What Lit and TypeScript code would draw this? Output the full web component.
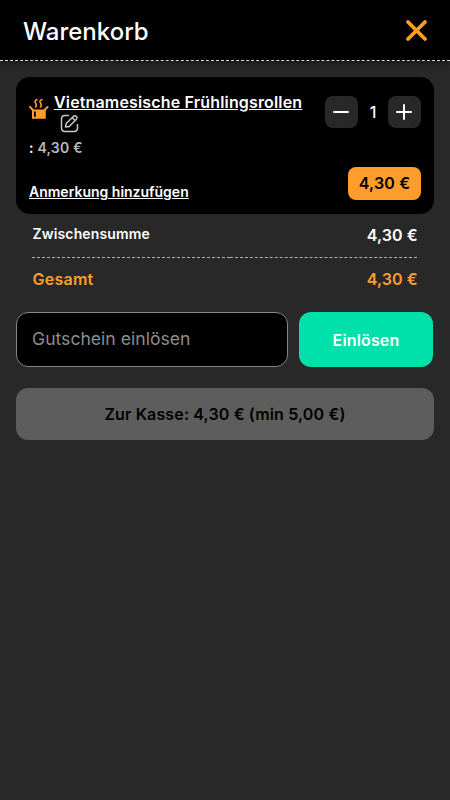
import { LitElement, html, css } from "lit";
import { customElement, state } from "lit/decorators.js";

const PRICE = 4.3;
const euro = (value: number) => `${value.toFixed(2).replace(".", ",")} €`;

@customElement("app-root")
class AppRoot extends LitElement {
  @state() private quantity = 1;

  static styles = css`
    :host {
      display: block;
      min-height: 800px;
      background: #282828;
      color: #fff;
      font-family: Inter, "Liberation Sans", sans-serif;
      font-size: 16px;
      line-height: 20px;
    }
    * { box-sizing: border-box; }
    button { font: inherit; border: 0; padding: 0; cursor: pointer; }
    svg { display: block; flex: none; }
    .header {
      height: 61px;
      background: #000;
      border-bottom: 1px dashed #d8d8d8;
      box-shadow: 0 1px 6px rgba(0, 0, 0, 0.6);
      display: flex;
      justify-content: space-between;
      align-items: center;
      padding: 3px 22px 0 23px;
    }
    .heading { margin: 0; font-size: 24px; font-weight: 500; line-height: 30px; }
    .close { background: none; margin-top: -2px; }
    .content { padding: 16px 16px 0; }
    .card {
      height: 137px;
      border-radius: 14px;
      background: #000;
      padding: 14px 13px 14px;
      display: flex;
      justify-content: space-between;
    }
    .details { display: flex; flex-direction: column; align-items: flex-start; }
    .product { display: flex; }
    .pot { margin: 7px 5px 0 0; }
    .name { font-weight: 600; line-height: 22px; letter-spacing: 0.16px; text-decoration: underline; white-space: nowrap; }
    .edit { margin: 1px 0 0 6px; }
    .unit { margin-top: 5px; font-size: 14px; font-weight: 600; line-height: 20px; letter-spacing: 0.2px; }
    .unit-price { color: #b9b9bd; }
    .note { margin-top: 24px; font-size: 14px; font-weight: 600; line-height: 20px; text-decoration: underline; }
    .side { display: flex; flex-direction: column; justify-content: space-between; align-items: flex-end; padding-top: 5px; }
    .stepper { display: flex; align-items: center; }
    .step {
      width: 33px;
      height: 32px;
      border-radius: 8px;
      background: #282828;
      display: flex;
      align-items: center;
      justify-content: center;
      padding-right: 1px;
    }
    .count { width: 30px; text-align: center; font-weight: 500; }
    .total {
      width: 73px;
      height: 33px;
      border-radius: 8px;
      background: #ff9d2c;
      color: #000;
      font-weight: 600;
      line-height: 33px;
      letter-spacing: 0.15px;
      text-align: center;
    }
    .summary { display: grid; grid-template-columns: 198px 187px; margin: 0 16px; }
    .cell { height: 43px; line-height: 43px; font-weight: 600; }
    .value { text-align: right; letter-spacing: 0.1px; }
    .amount { margin-right: -0.8px; }
    .subtotal { border-bottom: 1px dashed #b0b0b0; height: 44px; }
    .subtotal.label { font-size: 14px; line-height: 40px; letter-spacing: 0.15px; }
    .label { text-indent: 0.5px; }
    .grand { color: #ff9d2c; }
    .grand.label { letter-spacing: 0.25px; }
    .voucher { display: flex; gap: 11px; margin-top: 11px; padding-right: 1px; }
    .code {
      width: 272px;
      height: 55px;
      border: 1px solid #858585;
      border-radius: 12px;
      background: #000;
      color: #fff;
      font: 400 17.6px Inter, "Liberation Sans", sans-serif;
      padding: 0 15px 2px;
      outline: none;
    }
    .code::placeholder { color: #8d8d8d; opacity: 1; }
    .redeem { flex: 1; height: 55px; border-radius: 12px; background: #00e0ab; color: #fff; font-weight: 600; letter-spacing: 0.15px; }
    .checkout {
      width: 100%;
      height: 52px;
      margin-top: 21px;
      border-radius: 12px;
      background: #5d5d5d;
      color: #000;
      font-weight: 600;
      letter-spacing: 0.15px;
    }
  `;

  render() {
    const sum = euro(PRICE * this.quantity);
    return html`
      <header class="header">
        <h1 class="heading">Warenkorb</h1>
        <button class="close" aria-label="Schließen">
          <svg width="23" height="23" viewBox="0 0 23 23" fill="none" stroke="#ff9d2c" stroke-width="3.8" stroke-linecap="round">
            <path d="M3 3 20 20M20 3 3 20" />
          </svg>
        </button>
      </header>
      <main class="content">
        <section class="card">
          <div class="details">
            <div class="product">
              <svg class="pot" width="20" height="22" viewBox="0 0 20 22" fill="none" stroke="#ff9d2c" stroke-width="1.6" stroke-linecap="round" stroke-linejoin="round">
                <path d="M8 1.500Q4.800 3 6.500 5T6.500 9M13 1.500Q9.800 3 11.500 5T11.500 9" />
                <path d="M1 9 4 12M18.600 9 15.600 12" stroke-width="1.9" />
                <path d="M3 11.500h13.800v9.300H3zM5 13.500v5.300h1.800v-5.300z" fill="#ff9d2c" fill-rule="evenodd" stroke="none" />
              </svg>
              <div>
                <div class="name">Vietnamesische Frühlingsrollen</div>
                <svg class="edit" width="19" height="19" viewBox="0 0 19 19" fill="none" stroke="#c7c7c7" stroke-width="1.5" stroke-linecap="round" stroke-linejoin="round">
                  <path d="M8.500 1.500H5Q1.500 1.500 1.500 5v9Q1.500 17.500 5 17.500h9Q17.500 17.500 17.500 14v-3.500" />
                  <path d="m5.500 13 .7-3.500 7.300-7.300q1.500-1.100 2.800.2t.2 2.800L9.200 12.500zM12.500 4l2.500 2.500" />
                </svg>
              </div>
            </div>
            <div class="unit">: <span class="unit-price">${euro(PRICE)}</span></div>
            <div class="note">Anmerkung hinzufügen</div>
          </div>
          <div class="side">
            <div class="stepper">
              <button class="step" aria-label="Weniger" @click=${() => (this.quantity = Math.max(1, this.quantity - 1))}>
                <svg width="16" height="16" viewBox="0 0 16 16" stroke="#fff" stroke-width="2" stroke-linecap="round"><path d="M1 8h14" /></svg>
              </button>
              <span class="count">${this.quantity}</span>
              <button class="step" aria-label="Mehr" @click=${() => this.quantity++}>
                <svg width="16" height="16" viewBox="0 0 16 16" stroke="#fff" stroke-width="2" stroke-linecap="round"><path d="M1 8h14M8 1v14" /></svg>
              </button>
            </div>
            <div class="total">${sum}</div>
          </div>
        </section>
        <section class="summary">
          <div class="cell subtotal label">Zwischensumme</div>
          <div class="cell subtotal value"><div class="amount">${sum}</div></div>
          <div class="cell grand label">Gesamt</div>
          <div class="cell grand value"><div class="amount">${sum}</div></div>
        </section>
        <div class="voucher">
          <input class="code" placeholder="Gutschein einlösen" />
          <button class="redeem">Einlösen</button>
        </div>
        <button class="checkout">Zur Kasse: ${sum} (min 5,00 €)</button>
      </main>
    `;
  }
}
